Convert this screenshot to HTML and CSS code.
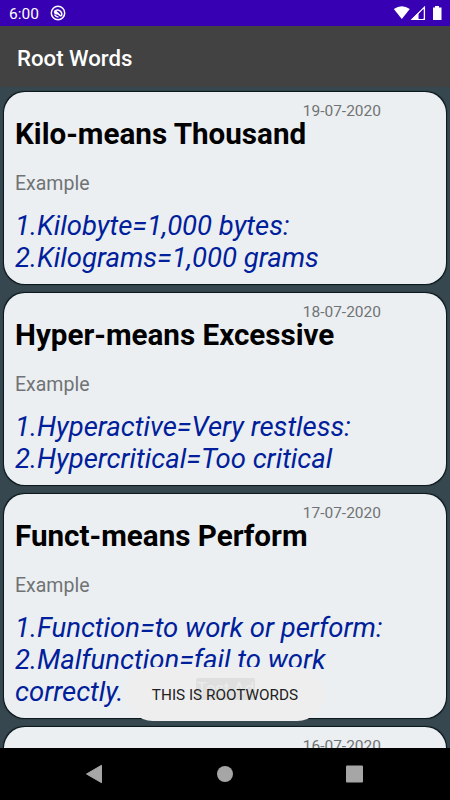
FILE: index.html
```html
<!DOCTYPE html>
<html lang="en">
<head>
    <meta charset="UTF-8">
    <meta name="viewport" content="width=device-width, initial-scale=1.0">
    <title>Root Words</title>
    <link rel="stylesheet" href="styles.css">
</head>
<body>
    <div class="status-bar">
        <span class="clock">6:00</span>
        <svg class="debug-icon" width="16" height="16" viewBox="0 0 16 16">
            <circle cx="8" cy="8" r="6.700" fill="none" stroke="#fff" stroke-width="1.500"/>
            <path d="M4.500 6.200A4.300 4.300 0 0 1 11.300 11.200" fill="none" stroke="#fff" stroke-width="1.500"/>
            <path d="M3.800 6.300L6.500 6 11.500 10.700 10.500 11.800 7.500 9.500 6 9.600 4 8.300Z" fill="#fff"/>
            <path d="M4.500 9.700Q6 12 8.500 12.200" fill="none" stroke="#fff" stroke-width="1.300"/>
        </svg>
        <div class="status-icons">
            <svg width="56" height="16" viewBox="0 0 56 16">
                <path d="M.8 4Q8.800-1.500 16.800 4L8.800 14Z" fill="#fff"/>
                <path d="M19.300 14.300L31.400 2.200V14.300Z" fill="none" stroke="#fff" stroke-width="1.300"/>
                <path d="M18 15L25.500 7.500V15Z" fill="#fff"/>
                <path d="M26 14V9L30 4.500V14Z" fill="#3700b3"/>
                <path d="M40 2.500H42V1H46V2.500H48.500V15H40Z" fill="#fff"/>
            </svg>
        </div>
    </div>
    <header class="app-bar">
        <h1>Root Words</h1>
    </header>
    <main class="list">
        <article class="card">
            <div class="date">19-07-2020</div>
            <h2>Kilo-means Thousand</h2>
            <div class="label">Example</div>
            <p>1.Kilobyte=1,000 bytes:<br>2.Kilograms=1,000 grams</p>
        </article>
        <article class="card">
            <div class="date">18-07-2020</div>
            <h2>Hyper-means Excessive</h2>
            <div class="label">Example</div>
            <p>1.Hyperactive=Very restless:<br>2.Hypercritical=Too critical</p>
        </article>
        <article class="card">
            <div class="date">17-07-2020</div>
            <h2>Funct-means Perform</h2>
            <div class="label">Example</div>
            <p>1.Function=to work or perform:<br>2.Malfunction=fail to work<br>correctly.</p>
        </article>
        <article class="card">
            <div class="date">16-07-2020</div>
        </article>
    </main>
    <nav class="nav-bar">
        <svg width="450" height="52" viewBox="0 0 450 52">
            <path d="M86.500 26L101.500 17.300V34.700Z" fill="#a6a6a6" stroke="#a6a6a6" stroke-linejoin="round"/>
            <circle cx="225" cy="26" r="8" fill="#a6a6a6"/>
            <rect x="346" y="17.500" width="17" height="17" rx="1" fill="#a6a6a6"/>
        </svg>
    </nav>
    <div class="toast">
        <span class="ad-label">Test Ad</span>
        <span class="toast-text">THIS IS ROOTWORDS</span>
    </div>
</body>
</html>
```
FILE: styles.css
```css
* {
    box-sizing: border-box;
}
body {
    display: flex;
    flex-direction: column;
    position: relative;
    width: 450px;
    height: 800px;
    margin: 0;
    overflow: hidden;
    background-color: #37474f;
    font-family: Roboto, sans-serif;
}
.status-bar {
    display: flex;
    align-items: center;
    height: 26px;
    padding: 0 8px 0 9px;
    flex: none;
    background-color: #3700b3;
    color: #fff;
}
.clock {
    width: 41px;
    padding-top: 2px;
    font-size: 15.5px;
    line-height: 24px;
}
.status-icons {
    height: 16px;
    margin-left: auto;
    margin-right: -7px;
}
.status-icons svg {
    display: block;
}
.app-bar {
    display: flex;
    align-items: center;
    height: 61px;
    padding: 2px 17px 0;
    flex: none;
    background-color: #424242;
    color: #fff;
}
h1 {
    margin: 0;
    font-size: 22.2px;
    font-weight: 500;
}
.list {
    display: flex;
    flex-direction: column;
    gap: 9px;
    flex: 1;
    min-height: 0;
    padding: 5px 4px 0;
    overflow: hidden;
}
.card {
    flex: none;
    min-height: 192px;
    padding: 10px 11px 0;
    background-color: #eceff1;
    border-radius: 21px;
    box-shadow: 0 0 1px 0.3px #07151a;
}
.date {
    margin-right: 54px;
    color: #707375;
    font-size: 15.5px;
    line-height: 18px;
    text-align: right;
}
h2 {
    margin: -3px 0 0;
    color: #000;
    font-size: 29.6px;
    font-weight: 700;
    line-height: 35px;
}
.label {
    margin-top: 20px;
    color: #707375;
    font-size: 19.5px;
    line-height: 24px;
}
.card p {
    margin: 14px 0 0;
    padding-bottom: 10px;
    color: #00209b;
    font-size: 27.5px;
    font-style: italic;
    line-height: 32px;
}
.nav-bar {
    height: 52px;
    flex: none;
    background-color: #000;
}
.nav-bar svg {
    display: block;
}
/* toast floats over the list and the ad label */
.toast {
    display: flex;
    justify-content: center;
    align-items: center;
    position: absolute;
    left: 126px;
    top: 667px;
    width: 198px;
    height: 54px;
    border-radius: 27px;
    background-color: #eee;
}
.ad-label {
    position: absolute;
    left: 70px;
    top: 11px;
    width: 59px;
    height: 22px;
    border-radius: 2px;
    background-color: #dfdfdf;
    color: #ececec;
    font-size: 17px;
    line-height: 21px;
    text-align: center;
    white-space: nowrap;
}
.toast-text {
    position: relative;
    padding-top: 2px;
    color: #222;
    font-size: 15.3px;
}
```
